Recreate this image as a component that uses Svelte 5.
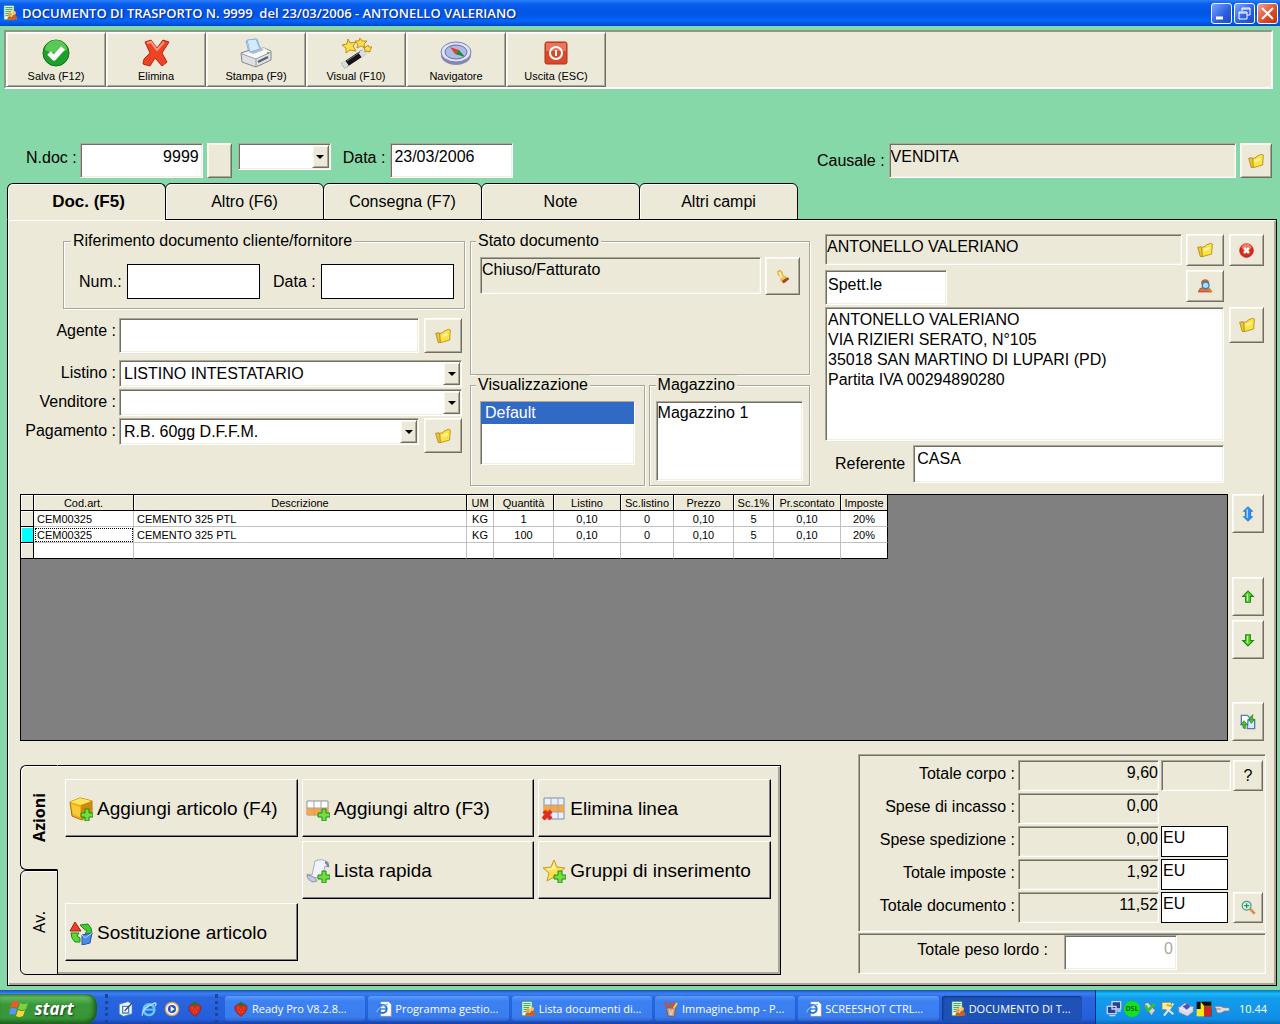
<script lang="ts">
	let activeTab = 'Doc. (F5)';
	let view = 'Default';
	let store = 'Magazzino 1';
	let priceList = 'LISTINO INTESTATARIO';
	let payment = 'R.B. 60gg D.F.F.M.';
	let address =
		'ANTONELLO VALERIANO\nVIA RIZIERI SERATO, N°105\n35018 SAN MARTINO DI LUPARI (PD)\nPartita IVA 00294890280';

	const toolbar = [
		{label: 'Salva (F12)', icon: 'ok'},
		{label: 'Elimina', icon: 'cross'},
		{label: 'Stampa (F9)', icon: 'printer'},
		{label: 'Visual (F10)', icon: 'wand'},
		{label: 'Navigatore', icon: 'compass'},
		{label: 'Uscita (ESC)', icon: 'power'}
	];
	const tabs = ['Doc. (F5)', 'Altro (F6)', 'Consegna (F7)', 'Note', 'Altri campi'];

	const columns = [
		{title: 'Cod.art.', width: 100},
		{title: 'Descrizione', width: 333},
		{title: 'UM', width: 27},
		{title: 'Quantità', width: 60},
		{title: 'Listino', width: 67},
		{title: 'Sc.listino', width: 53},
		{title: 'Prezzo', width: 60},
		{title: 'Sc.1%', width: 40},
		{title: 'Pr.scontato', width: 67},
		{title: 'Imposte', width: 47}
	];
	const rows = [
		['CEM00325', 'CEMENTO 325 PTL', 'KG', '1', '0,10', '0', '0,10', '5', '0,10', '20%'],
		['CEM00325', 'CEMENTO 325 PTL', 'KG', '100', '0,10', '0', '0,10', '5', '0,10', '20%'],
		['', '', '', '', '', '', '', '', '', '']
	];
	let currentRow = 1;

	const actions = [
		{label: 'Aggiungi articolo (F4)', icon: 'box'},
		{label: 'Aggiungi altro (F3)', icon: 'gridAdd'},
		{label: 'Elimina linea', icon: 'gridDel'},
		null,
		{label: 'Lista rapida', icon: 'scroll'},
		{label: 'Gruppi di inserimento', icon: 'star'},
		{label: 'Sostituzione articolo', icon: 'swap'}
	];

	const totals = [
		{id: 'corpo', label: 'Totale corpo :', value: '9,60', extra: 'empty', button: 'help'},
		{id: 'incasso', label: 'Spese di incasso :', value: '0,00', extra: '', button: ''},
		{id: 'spedizione', label: 'Spese spedizione :', value: '0,00', extra: 'EU', button: ''},
		{id: 'imposte', label: 'Totale imposte :', value: '1,92', extra: 'EU', button: ''},
		{id: 'documento', label: 'Totale documento :', value: '11,52', extra: 'EU', button: 'zoom'}
	];

	const tasks = [
		{label: 'Ready Pro V8.2.8...', icon: 'berry'},
		{label: 'Programma gestio...', icon: 'page'},
		{label: 'Lista documenti di...', icon: 'doc'},
		{label: 'Immagine.bmp - P...', icon: 'paint'},
		{label: 'SCREESHOT CTRL...', icon: 'page'},
		{label: 'DOCUMENTO DI T...', icon: 'doc', active: true}
	];
</script>

{#snippet plus()}
	<path d="M16 12h4v4h4v4h-4v4h-4v-4h-4v-4h4z" fill="#6fe03c" stroke="#1f8a1a" />
{/snippet}

{#snippet icon(name: string, size: number)}
	<svg width={size} height={size} viewBox="0 0 24 24" aria-hidden="true">
		{#if name === 'folder'}
			<path d="M1 8l5-1 2 2 1 12-4 1z" fill="#f0c62c" stroke="#9a720c" />
			<path d="M7 8l5-1 1-2 7-3 3 1-1 15-14 4z" fill="#ffe23c" stroke="#9a720c" />
			<path d="M10 10l9-3v4l-9 4z" fill="#fff3a0" />
		{:else if name === 'stop'}
			<circle cx="12" cy="12" r="11" fill="#dd2a1a" stroke="#a31208" />
			<path d="M4 8a8 7 0 0 1 16 0q-8 4-16 0z" fill="#f77a66" />
			<path d="M8 8l8 8M16 8l-8 8" stroke="#fff" stroke-width="4" />
		{:else if name === 'person'}
			<path d="M6 7q1-5 7-5 6 1 5 7l-2 3H8z" fill="#c9642a" />
			<path d="M2 21q1-6 7-7h6q6 2 7 7z" fill="#dd6d43" stroke="#a3431f" />
			<path d="M16 15l6 6" stroke="#d98b32" stroke-width="3" />
			<circle cx="13" cy="11" r="5" fill="#a9e0fa" stroke="#3a7fc0" stroke-width="2" />
		{:else if name === 'stamp'}
			<path d="M4 4q4-4 7 0l2 7 4 1 3 4-7 6-4-4 1-4L5 9z" fill="#f2c04a" stroke="#d09a35" />
			<path d="M11 19l9-6 3 3-9 7z" fill="#9c4a20" />
			<path d="M7 5l4 9" stroke="#fff0a8" stroke-width="3" />
		{:else if name === 'updown'}
			<path d="M12 1l7 7h-3v8h3l-7 7-7-7h3V8H5z" fill="#2f8fee" stroke="#1559ad" />
			<path d="M11 5v13" stroke="#a9dcff" stroke-width="2" />
		{:else if name === 'up'}
			<path d="M12 2l9 9h-5v10H8V11H3z" fill="#5ed62f" stroke="#23861a" stroke-width="2" />
			<path d="M11 7v12" stroke="#b8f592" stroke-width="2" />
		{:else if name === 'down'}
			<path d="M12 22l9-9h-5V3H8v10H3z" fill="#5ed62f" stroke="#23861a" stroke-width="2" />
			<path d="M11 5v12" stroke="#b8f592" stroke-width="2" />
		{:else if name === 'copy'}
			<path d="M2 2h9l3 3v11H2z" fill="#fff" stroke="#587bb8" stroke-width="2" />
			<path d="M12 9h10v13H11z" fill="#dceaff" stroke="#587bb8" stroke-width="2" />
			<path d="M19 1v7h3l-5 6-4-6h3V4z" fill="#41c52c" stroke="#1a7a18" />
			<path d="M8 22v-6h3l-5-6-5 6h3l1 5z" fill="#41c52c" stroke="#1a7a18" />
		{:else if name === 'zoom'}
			<path d="M14 14l8 8" stroke="#e58c4c" stroke-width="4" />
			<circle cx="9" cy="9" r="7" fill="#d9f2e8" stroke="#4b9b8d" stroke-width="2" />
			<path d="M9 5v8M5 9h8" stroke="#28934f" stroke-width="2" />
		{:else if name === 'box'}
			<path d="M1 5l10-4 12 3v13l-10 6-10-4z" fill="#eeb01a" stroke="#a87208" />
			<path d="M1 5l11 3 11-4L11 1z" fill="#ffe35c" />
			<path d="M12 8l11-4v13l-11 6z" fill="#c98c0c" />
			<path d="M2 7l9 3v10l-7-3z" fill="#f9c938" />
			{@render plus()}
		{:else if name === 'gridAdd'}
			<path d="M1 4h21v14H1z" fill="#fff" stroke="#8f8fa0" />
			<path d="M1 11h21v7H1z" fill="#f8a83c" />
			<path d="M1 11h21M8 4v14M15 4v14" stroke="#a8a0a0" />
			{@render plus()}
		{:else if name === 'gridDel'}
			<path d="M2 1h20v21H2z" fill="#e9f1ff" stroke="#7f8cab" />
			<path d="M2 8h20v7H2z" fill="#f8a83c" />
			<path d="M2 8h20M2 15h20M9 1v21M16 1v21" stroke="#a8a4b0" />
			<path d="M2 14l7 8M9 14l-8 8" stroke="#e02c1a" stroke-width="4" />
		{:else if name === 'scroll'}
			<path d="M9 2q7-3 13 1l1 5-4-1-3 12-14-1-1-3 5 1z" fill="#f1f3fb" stroke="#a6adc4" />
			<path d="M1 16q8 1 10 6l-4 1q-6-2-6-7z" fill="#c2c9dc" stroke="#8992b0" />
			<path d="M19 3q3 1 3 5" fill="none" stroke="#7982a3" stroke-width="2" />
			{@render plus()}
		{:else if name === 'star'}
			<path d="M12 1l3 7 8 1-6 5 2 8-7-4-7 4 2-8-6-5 8-1z" fill="#ffdf58" stroke="#c69a1c" />
			<path d="M12 4l2 6-8 1-2-1 6-1z" fill="#fff5ae" />
			{@render plus()}
		{:else if name === 'swap'}
			<path d="M6 1l6 9H1z" fill="#ec4228" stroke="#a02412" />
			<path d="M11 4l8-1 3 4 1 6h-7l2-3-3-2z" fill="#48c930" stroke="#1d8718" />
			<path d="M2 12h8l-2 3 3 2v4H6l-3-4z" fill="#5fd83a" stroke="#1d8718" />
			<path d="M13 14l10-2-2 10-8 2z" fill="#4a8ae8" stroke="#2854a5" />
			<path d="M13 14l3 3 7-5" fill="none" stroke="#b4d5ff" />
		{:else if name === 'doc'}
			<path d="M3 1h15v21H3z" fill="#f4fff4" stroke="#439a60" />
			<path d="M5 4h11M5 7h11M5 10h9M5 13h6M5 16h5" stroke="#4cae68" stroke-width="2" />
			<circle cx="12" cy="14" r="3" fill="#f0a23a" />
			<circle cx="18" cy="12" r="3" fill="#ffc24b" />
			<path d="M8 22q0-6 5-5l2 1q0-4 4-3 4 1 4 7z" fill="#cd5f20" />
		{:else if name === 'berry'}
			<path d="M3 8q4-5 9-2 6-3 9 2 1 8-9 15Q1 16 3 8z" fill="#dc2d1c" stroke="#86190c" />
			<path d="M6 5l5-3 2-1 1 2 5 2-6 3z" fill="#3a6a1c" />
			<path d="M8 10v1M12 12v1M16 10v1M10 16v1M14 16v1" stroke="#ffd28a" />
		{:else if name === 'page'}
			<path d="M7 1h12l4 4v18H7z" fill="#fff" stroke="#8a8a8a" />
			<circle cx="10" cy="12" r="6" fill="none" stroke="#2a73d4" stroke-width="3" />
			<path d="M5 12h11" stroke="#2a73d4" stroke-width="2" />
			<path d="M1 17Q5 6 18 5" fill="none" stroke="#73b3f4" stroke-width="2" />
		{:else if name === 'paint'}
			<path d="M5 10h14l-2 13H8z" fill="#c9a184" stroke="#76503a" />
			<path d="M8 11L3 2M11 11V2M14 11l3-9" stroke="#e0442a" stroke-width="3" />
			<path d="M16 11l5-8" stroke="#f6cf3c" stroke-width="3" />
			<path d="M12 11l1-8" stroke="#36a148" stroke-width="2" />
			<path d="M10 13l1 8M14 13l-1 8" stroke="#fff" />
		{:else if name === 'desk'}
			<path d="M2 5l13-4 6 3v15l-13 4-6-4z" fill="#eef7ff" stroke="#5087c4" />
			<path d="M7 8h9v10H7z" fill="#fff" stroke="#4a84c7" stroke-width="2" />
			<path d="M10 15l11-12" stroke="#344b78" stroke-width="2" />
		{:else if name === 'ie'}
			<circle cx="12" cy="13" r="8" fill="none" stroke="#65c4ff" stroke-width="4" />
			<path d="M6 13h14" stroke="#65c4ff" stroke-width="3" />
			<path d="M2 22Q1 10 21 3q3 0 0 5" fill="none" stroke="#b3e2ff" stroke-width="2" />
		{:else if name === 'media'}
			<circle cx="12" cy="12" r="10" fill="#e9f2ff" stroke="#e29a4b" stroke-width="2" />
			<circle cx="12" cy="12" r="6" fill="#2456b5" />
			<path d="M10 8l6 4-6 4z" fill="#fff" />
		{:else if name === 'net'}
			<path d="M9 1h13v11H9zM2 8h13v11H2z" fill="#283f92" stroke="#c9d5ed" stroke-width="2" />
			<path d="M5 22h9M17 15h5" stroke="#c9d5ed" stroke-width="2" />
		{:else if name === 'usb'}
			<path d="M3 4l6-2 11 12-6 8z" fill="#c9d5d9" stroke="#50646c" />
			<path d="M5 7l4 7 10-9" fill="none" stroke="#3cbf35" stroke-width="4" />
		{:else if name === 'tool'}
			<path d="M3 2h14v11H3z" fill="#fff07c" stroke="#777" />
			<path d="M20 4L6 22M5 7l15 13" stroke="#e8e8df" stroke-width="3" />
			<path d="M10 6l9 2" stroke="#c9b630" stroke-width="3" />
		{:else if name === 'device'}
			<path d="M1 10l9-7 13 6v7l-9 7-13-6z" fill="#d7d8e8" stroke="#757892" />
			<path d="M7 8l7-4 5 4-6 5z" fill="#4a53c4" />
			<path d="M1 10l13 6 9-7" fill="none" stroke="#fff" />
		{:else if name === 'blocks'}
			<path d="M1 1h11v11H1zM12 12h11v11H12z" fill="#101010" />
			<path d="M12 1h11v11H12z" fill="#239d35" />
			<path d="M1 12h11v11H1z" fill="#ffe51c" />
			<path d="M12 8h11v15H12z" fill="#d52719" />
			<path d="M12 1h11v6H12z" fill="#101010" />
			<path d="M7 1l5 6v5H7z" fill="#ffe51c" />
		{:else if name === 'plug'}
			<path d="M1 8h9l5 2h8v5h-7l-6 3H5z" fill="#dedede" stroke="#777" />
			<path d="M1 12h9" stroke="#555" />
		{/if}
	</svg>
{/snippet}

{#snippet bigIcon(name: string)}
	<svg width="32" height="32" viewBox="0 0 32 32" aria-hidden="true">
		{#if name === 'ok'}
			<circle cx="16" cy="16" r="13" fill="#1f9f2c" stroke="#0d7418" />
			<path d="M5 13a11 10 0 0 1 22 0q-11 6-22 0z" fill="#5ac757" />
			<path d="M9 16l5 5 9-10" fill="none" stroke="#fff" stroke-width="5" stroke-linejoin="round" />
		{:else if name === 'cross'}
			<path d="M5 5l6-2 6 8 6-8 6 2-7 11 5 9-5 4-7-8-5 8-7-2 1-5 6-6z" fill="#ee4426" stroke="#ba2512" />
			<path d="M7 6l4-1 6 8 7-8" fill="none" stroke="#ff9880" stroke-width="2" />
		{:else if name === 'printer'}
			<path d="M6 4l11-2 4 11-12 3z" fill="#e3f2ff" stroke="#89b3dc" />
			<path d="M1 16l9-3 14-2 7 3v9l-15 7-14-5z" fill="#dfe0e4" stroke="#85878e" />
			<path d="M2 17l14 5 15-7-7-4-14 3z" fill="#f8f8fa" />
			<path d="M2 17l14 5 15-7M16 22v8" fill="none" stroke="#999ca5" />
			<path d="M8 15l12-4 4 2-11 4z" fill="#b7bcc8" />
			<path d="M7 3l9-1 4 10-10 3z" fill="#d2e9ff" stroke="#89b3dc" />
			<path d="M18 25l10-5" stroke="#555d69" stroke-width="2" />
			<circle cx="28" cy="16" r="1" fill="#3fac2c" />
		{:else if name === 'wand'}
			<path d="M3 29L24 15" stroke="#151515" stroke-width="6" />
			<path d="M3 29l4-3M20 18l7-5" stroke="#d9dce3" stroke-width="6" />
			<path d="M7 24l13-9" stroke="#777" />
			<path d="M8 2l2 4 6-1-3 4 3 5-6-1-4 3v-5L2 8l5-1z" fill="#ffe04c" stroke="#c38e17" />
			<path d="M20 1l2 3 5 0-3 3 1 4-4-2-4 2 1-4-3-3 4 0zM28 8l1 2 3 0-2 3 0 2-3-1-2 1 0-3-2-2 3 0z" fill="#ffe04c" stroke="#c38e17" />
		{:else if name === 'compass'}
			<ellipse cx="16" cy="18" rx="15" ry="10" fill="#8288b4" />
			<ellipse cx="16" cy="15" rx="15" ry="10" fill="#dfe3fa" stroke="#7d83af" />
			<ellipse cx="16" cy="15" rx="11" ry="7" fill="#aebce5" stroke="#686f9b" />
			<path d="M10 10l9 3-4 4z" fill="#e1402b" />
			<path d="M15 17l4-4 6 7z" fill="#248638" />
		{:else if name === 'power'}
			<rect x="5" y="5" width="22" height="22" rx="2" fill="#d94a2b" stroke="#ad3218" />
			<path d="M6 6h20v8H6z" fill="#ea765a" />
			<circle cx="16" cy="16" r="6" fill="none" stroke="#fff" stroke-width="2" />
			<path d="M16 13v6" stroke="#fff" stroke-width="2" />
		{/if}
	</svg>
{/snippet}

<div class="screen">
	<header class="titlebar">
		{@render icon('doc', 16)}
		<h1>DOCUMENTO DI TRASPORTO N. 9999&nbsp; del 23/03/2006 - ANTONELLO VALERIANO</h1>
		<div class="window-buttons">
			<button aria-label="Riduci">
				<svg width="19" height="19" viewBox="0 0 19 19"><path d="M4 14h7" stroke="#fff" stroke-width="3" /></svg>
			</button>
			<button aria-label="Ripristina">
				<svg width="19" height="19" viewBox="0 0 19 19" fill="none" stroke="#fff">
					<path d="M7 7V4h8v7h-3M7 5h8M4 8h8v7H4zM4 9h8" />
				</svg>
			</button>
			<button class="close" aria-label="Chiudi">
				<svg width="19" height="19" viewBox="0 0 19 19"><path d="M4 4l11 11M15 4L4 15" stroke="#fff" stroke-width="2" /></svg>
			</button>
		</div>
	</header>

	<nav class="toolbar">
		{#each toolbar as item}
			<button class="raised tool">
				{@render bigIcon(item.icon)}
				<span>{item.label}</span>
			</button>
		{/each}
	</nav>

	<section class="doc-head">
		<label for="ndoc">N.doc :</label>
		<input id="ndoc" class="sunken short right" value="9999" />
		<button class="raised blank" aria-label="Numerazione"></button>
		<div class="combo sunken small">
			<select aria-label="Serie"><option></option></select>
			<span class="arrow raised"></span>
		</div>
		<label for="data-doc" class="date-label">Data :</label>
		<input id="data-doc" class="sunken short" value="23/03/2006" />
		<div class="causale">
			<label for="causale">Causale :</label>
			<input id="causale" class="sunken grey" value="VENDITA" readonly />
			<button class="raised" aria-label="Scegli causale">{@render icon('folder', 16)}</button>
		</div>
	</section>

	<div class="tabs" role="tablist">
		{#each tabs as tab}
			<button role="tab" aria-selected={activeTab === tab} class:active={activeTab === tab} on:click={() => (activeTab = tab)}>{tab}</button>
		{/each}
	</div>

	<main class="panel">
		<div class="form">
			<div class="left">
				<fieldset class="ref">
					<legend>Riferimento documento cliente/fornitore</legend>
					<label for="ref-num">Num.:</label>
					<input id="ref-num" class="flat" />
					<label for="ref-data" class="second">Data :</label>
					<input id="ref-data" class="flat" />
				</fieldset>
				<div class="line agent">
					<label for="agente">Agente :</label>
					<input id="agente" class="sunken" />
					<button class="raised" aria-label="Scegli agente">{@render icon('folder', 16)}</button>
				</div>
				<div class="line">
					<label for="listino">Listino :</label>
					<div class="combo sunken">
						<select id="listino" bind:value={priceList}><option>LISTINO INTESTATARIO</option></select>
						<span class="arrow raised"></span>
					</div>
				</div>
				<div class="line">
					<label for="venditore">Venditore :</label>
					<div class="combo sunken">
						<select id="venditore"><option></option></select>
						<span class="arrow raised"></span>
					</div>
				</div>
				<div class="line">
					<label for="pagamento">Pagamento :</label>
					<div class="combo sunken">
						<select id="pagamento" bind:value={payment}><option>R.B. 60gg D.F.F.M.</option></select>
						<span class="arrow raised"></span>
					</div>
					<button class="raised" aria-label="Scegli pagamento">{@render icon('folder', 16)}</button>
				</div>
			</div>

			<div class="middle">
				<fieldset class="state">
					<legend>Stato documento</legend>
					<input class="sunken grey" aria-label="Stato documento" value="Chiuso/Fatturato" readonly />
					<button class="raised" aria-label="Cambia stato">{@render icon('stamp', 15)}</button>
				</fieldset>
				<div class="lists">
					<fieldset class="view">
						<legend>Visualizzazione</legend>
						<select class="sunken" size="3" aria-label="Visualizzazione" bind:value={view}>
							<option>Default</option>
						</select>
					</fieldset>
					<fieldset class="store">
						<legend>Magazzino</legend>
						<select class="sunken" size="4" aria-label="Magazzino">
							<option>{store}</option>
						</select>
					</fieldset>
				</div>
			</div>

			<div class="right-col">
				<div class="cust name">
					<input class="sunken grey" aria-label="Cliente" value="ANTONELLO VALERIANO" readonly />
					<button class="raised" aria-label="Scegli cliente">{@render icon('folder', 16)}</button>
				</div>
				<button class="raised side" aria-label="Rimuovi cliente">{@render icon('stop', 15)}</button>
				<div class="cust title">
					<input class="sunken" aria-label="Titolo" value="Spett.le" />
					<button class="raised" aria-label="Cerca cliente">{@render icon('person', 16)}</button>
				</div>
				<textarea class="sunken" aria-label="Indirizzo" bind:value={address}></textarea>
				<button class="raised side tall" aria-label="Scegli indirizzo">{@render icon('folder', 16)}</button>
				<div class="cust contact">
					<label for="referente">Referente</label>
					<input id="referente" class="sunken" value="CASA" />
				</div>
			</div>
		</div>

		<div class="lines">
			<div class="grid-box">
				<table>
					<colgroup>
						<col class="mark-col" />
						{#each columns as column}
							<col style="width: {column.width}px" />
						{/each}
					</colgroup>
					<thead>
						<tr>
							<th></th>
							{#each columns as column}
								<th>{column.title}</th>
							{/each}
						</tr>
					</thead>
					<tbody>
						{#each rows as row, i}
							<tr class:current={i === currentRow}>
								<th></th>
								{#each row as cell}
									<td>{cell}</td>
								{/each}
							</tr>
						{/each}
					</tbody>
				</table>
			</div>
			<div class="side-buttons">
				<button class="raised" aria-label="Sposta">{@render icon('updown', 16)}</button>
				<button class="raised push" aria-label="Su">{@render icon('up', 14)}</button>
				<button class="raised" aria-label="Giù">{@render icon('down', 14)}</button>
				<button class="raised last" aria-label="Copia righe">{@render icon('copy', 16)}</button>
			</div>
		</div>

		<div class="bottom">
			<div class="actions">
				<div class="vtabs">
					<button class="active"><span>Azioni</span></button>
					<button><span>Av.</span></button>
				</div>
				<div class="action-grid">
					{#each actions as action}
						{#if action}
							<button>{@render icon(action.icon, 24)}{action.label}</button>
						{:else}
							<span></span>
						{/if}
					{/each}
				</div>
			</div>

			<div class="totals">
				<div class="sums sunken">
					{#each totals as total}
						<label for={total.id}>{total.label}</label>
						<input id={total.id} class="sunken grey right" value={total.value} readonly />
						{#if total.extra === 'empty'}
							<input class="sunken grey" aria-label="Valuta" readonly />
						{:else if total.extra}
							<input class="flat currency" aria-label="Valuta" value={total.extra} />
						{:else}
							<span></span>
						{/if}
						{#if total.button === 'help'}
							<button class="raised">?</button>
						{:else if total.button}
							<button class="raised" aria-label="Dettaglio">{@render icon('zoom', 15)}</button>
						{:else}
							<span></span>
						{/if}
					{/each}
				</div>
				<div class="weight sunken">
					<label for="peso">Totale peso lordo :</label>
					<input id="peso" class="sunken right" value="0" />
				</div>
			</div>
		</div>
	</main>

	<footer class="taskbar">
		<button class="start">
			<svg width="20" height="20" viewBox="0 0 20 20" aria-hidden="true">
				<path d="M3 3q3-2 7 0L8 9Q5 7 1 9z" fill="#f0572c" />
				<path d="M11 4q4 2 8 0l-2 6q-4 2-8 0z" fill="#7ed13b" />
				<path d="M1 10q3-2 7 0l-2 6q-3-2-6 0z" fill="#5b94f5" />
				<path d="M9 11q4 2 7 0l-2 6q-4 2-7 0z" fill="#ffd23c" />
			</svg>
			<span>start</span>
		</button>
		<div class="quick">
			{#each ['desk', 'ie', 'media', 'berry'] as name}
				<button aria-label={name}>{@render icon(name, 16)}</button>
			{/each}
		</div>
		<div class="tasks">
			{#each tasks as task}
				<button class:active={task.active}>{@render icon(task.icon, 16)}<span>{task.label}</span></button>
			{/each}
		</div>
		<div class="tray">
			{@render icon('net', 16)}
			<span class="dsl">DSL</span>
			{#each ['usb', 'tool', 'device', 'blocks', 'plug'] as name}
				{@render icon(name, 16)}
			{/each}
			<time>10.44</time>
		</div>
	</footer>
</div>

<style>
	:global(body) {
		margin: 0;
		background: #87d8a8;
	}
	* {
		box-sizing: border-box;
	}
	.screen {
		min-height: 100vh;
		display: flex;
		flex-direction: column;
		background: #87d8a8;
		font-family: 'Liberation Sans', Arial, sans-serif;
		font-size: 16px;
		line-height: 20px;
		color: #000;
	}
	button,
	input,
	select,
	textarea {
		font: inherit;
		color: inherit;
		margin: 0;
		padding: 0;
		border-radius: 0;
		outline: none;
	}
	button {
		display: flex;
		align-items: center;
		justify-content: center;
		flex: none;
	}
	svg {
		display: block;
		flex: none;
	}
	.raised {
		background: #ece9d8;
		border: 1px solid;
		border-color: #fff #716f64 #716f64 #fff;
		box-shadow: inset 1px 1px 0 #f8f6ee, inset -1px -1px 0 #aca899;
	}
	.sunken {
		border: 1px solid;
		border-color: #aca899 #fff #fff #aca899;
		box-shadow: inset 1px 1px 0 #716f64, inset -1px -1px 0 #f1efe2;
	}
	input,
	textarea {
		min-width: 0;
		background: #fff;
		padding: 0 3px 8px;
	}
	.grey {
		background: #ece9d8;
		padding-left: 1px;
	}
	.right {
		text-align: right;
	}
	.flat {
		border: 1px solid #000;
	}
	label {
		white-space: nowrap;
	}

	/* title bar */
	.titlebar {
		display: flex;
		align-items: center;
		height: 26px;
		padding: 0 2px 0 2px;
		gap: 4px;
		background: linear-gradient(#2a80fa, #0a5eee 15%, #0054e3 50%, #0464fc 80%, #0048c8);
	}
	h1 {
		flex: 1;
		margin: 0;
		color: #fff;
		font: 600 13px/20px 'Open Sans', 'Noto Sans', sans-serif;
		text-shadow: 1px 1px 1px #0a2a8a;
		white-space: nowrap;
	}
	.window-buttons {
		display: flex;
		gap: 2px;
	}
	.window-buttons button {
		width: 21px;
		height: 21px;
		border: 1px solid #fff;
		border-radius: 3px;
		background: linear-gradient(135deg, #7ba5f8, #2a5ee2 60%, #1c49c4);
	}
	.window-buttons .close {
		background: linear-gradient(135deg, #f2a088, #df4a24 60%, #b9310d);
	}

	/* toolbar */
	.toolbar {
		display: flex;
		margin: 4px 7px 0 4px;
		height: 59px;
		background: #ece9d8;
		border: 2px solid;
		border-color: #8b9a83 #fff #fff #8b9a83;
	}
	.tool {
		width: 100px;
		flex-direction: column;
		justify-content: flex-start;
		padding-top: 4px;
		font-size: 11px;
		line-height: 14px;
	}

	/* document header */
	.doc-head {
		display: flex;
		align-items: flex-start;
		margin: 54px 8px 0 26px;
		height: 40px;
	}
	.doc-head label {
		line-height: 29px;
	}
	.doc-head input {
		height: 35px;
	}
	.short {
		width: 123px;
		margin-left: 3px;
	}
	.blank {
		width: 25px;
		height: 35px;
		margin: 0 6px 0 4px;
	}
	.combo {
		display: flex;
		flex: 1;
		height: 27px;
		padding: 1px;
		background: #fff;
	}
	.combo select {
		flex: 1;
		min-width: 0;
		padding-left: 3px;
		border: 0;
		background: transparent;
		appearance: none;
	}
	.combo.small {
		flex: 0 0 93px;
	}
	.arrow {
		display: flex;
		align-items: center;
		justify-content: center;
		width: 17px;
	}
	.arrow::before {
		content: '';
		border: 4px solid transparent;
		border-top-color: #000;
		border-bottom-width: 0;
	}
	.date-label {
		margin: 0 2px 0 12px;
	}
	.causale {
		display: flex;
		flex: 0 0 455px;
		margin-left: auto;
		gap: 4px;
	}
	.causale label {
		line-height: 35px;
	}
	.causale input {
		flex: 1;
	}
	.causale button {
		width: 32px;
		height: 35px;
	}

	/* tabs and main panel */
	.tabs {
		display: flex;
		margin: 0 7px;
		position: relative;
	}
	.tabs button {
		width: 159px;
		height: 37px;
		margin-right: -1px;
		background: #ece9d8;
		border: 1px solid #000;
		border-radius: 6px 6px 0 0;
		box-shadow: inset 1px 1px 0 #fff;
	}
	.tabs .active {
		padding-left: 4px;
		font-size: 17px;
		font-weight: 700;
		border-bottom-color: #ece9d8;
	}
	.panel {
		flex: 1;
		display: flex;
		flex-direction: column;
		margin: -1px 3px 4px 7px;
		padding: 11px 12px 10px;
		background: #ece9d8;
		border: 1px solid #000;
		box-shadow: inset 1px 1px 0 #fff, inset -2px -2px 0 #aca899;
	}
	.form {
		display: grid;
		grid-template-columns: minmax(0, 445fr) minmax(0, 340fr) minmax(0, 449fr);
		gap: 5px;
	}
	fieldset {
		margin: 0;
		min-width: 0;
		border: 1px solid #aca899;
		box-shadow: inset 1px 1px 0 #fff, 1px 1px 0 #fff;
	}
	legend {
		margin-left: -4px;
		padding: 0 2px;
		height: 20px;
		background: #ece9d8;
	}
	.ref {
		display: flex;
		align-items: center;
		margin: 0 0 9px 43px;
		padding: 13px 10px 9px 15px;
		gap: 5px;
	}
	.ref legend {
		margin-left: -8px;
	}
	.ref input {
		flex: 1;
		height: 35px;
	}
	.ref .second {
		margin-left: 8px;
	}
	.line {
		display: flex;
		margin: 0 3px 2px 0;
	}
	.agent {
		margin-bottom: 7px;
	}
	.line label {
		flex: none;
		width: 99px;
		padding-right: 3px;
		text-align: right;
		line-height: 26px;
	}
	.line input {
		flex: 1;
		height: 35px;
	}
	.line button {
		width: 38px;
		height: 35px;
		margin-left: 5px;
	}
	.state {
		display: flex;
		align-items: flex-start;
		height: 144px;
		padding: 6px 9px;
		gap: 4px;
	}
	.state input {
		flex: 1;
		height: 37px;
		padding-bottom: 11px;
	}
	.state button {
		width: 35px;
		height: 38px;
	}
	.lists {
		display: flex;
		gap: 4px;
	}
	.lists fieldset {
		height: 111px;
		padding: 6px 9px;
	}
	.view {
		flex: 172;
	}
	.store {
		flex: 164;
	}
	.lists .store {
		padding: 6px;
	}
	.store legend {
		margin-left: 0;
	}
	.lists select {
		display: block;
		width: 100%;
		height: 64px;
		background: #fff;
		overflow: hidden;
	}
	.lists .store select {
		height: 80px;
	}
	option {
		min-height: 22px;
		padding: 2px 1px;
	}
	.view option:checked {
		padding-left: 4px;
		background: #316ac5 linear-gradient(#316ac5, #316ac5);
		-webkit-text-fill-color: #fff;
	}
	.right-col {
		display: grid;
		grid-template-columns: minmax(0, 1fr) 35px;
		grid-template-rows: 32px 33px 134px 38px;
		column-gap: 5px;
		row-gap: 4px;
		padding: 3px 0 0 10px;
		align-items: start;
	}
	.cust {
		grid-column: 1;
		display: flex;
		justify-content: space-between;
		gap: 4px;
	}
	.cust button {
		width: 38px;
		height: 32px;
	}
	.name input {
		flex: 1;
		height: 31px;
		padding-bottom: 6px;
	}
	.side {
		width: 35px;
		height: 32px;
	}
	.title input {
		width: 122px;
		height: 35px;
		padding: 0 2px 6px;
	}
	textarea {
		display: block;
		grid-column: 1;
		width: 100%;
		height: 134px;
		padding: 2px;
		resize: none;
		overflow: hidden;
	}
	.tall {
		height: 36px;
	}
	.contact {
		padding-left: 10px;
	}
	.contact label {
		line-height: 38px;
	}
	.contact input {
		flex: 1;
		height: 38px;
		margin-left: 4px;
		padding-bottom: 11px;
	}

	/* lines grid */
	.lines {
		display: flex;
		flex: 1;
		gap: 4px;
		margin-top: 8px;
		min-height: 247px;
	}
	.grid-box {
		flex: 1;
		border: 1px solid #000;
		background: #808080;
	}
	table {
		table-layout: fixed;
		width: 867px;
		border-collapse: separate;
		border-spacing: 0;
		background: #fff;
		font-size: 11px;
		line-height: 14px;
	}
	.mark-col {
		width: 13px;
	}
	th,
	td {
		height: 16px;
		padding: 0;
		font-weight: 400;
		text-align: center;
		white-space: nowrap;
		border-right: 1px solid #c0c0c0;
		border-bottom: 1px solid #c0c0c0;
	}
	th {
		background: #ece9d8;
		border-color: #000;
		box-shadow: inset 1px 1px 0 #fff;
	}
	td:nth-child(2),
	td:nth-child(3) {
		text-align: left;
		padding-left: 3px;
	}
	td:last-child {
		border-right-color: #000;
	}
	tbody tr:last-child td {
		border-bottom-color: #000;
	}
	.current th {
		background: #0ff;
	}
	.current td:nth-child(2) {
		outline: 1px dotted #000;
		outline-offset: -2px;
	}
	.side-buttons {
		display: flex;
		flex-direction: column;
		gap: 4px;
	}
	.side-buttons button {
		width: 32px;
		height: 39px;
	}
	.side-buttons .push {
		margin-top: 40px;
	}
	.side-buttons .last {
		margin-top: auto;
	}

	/* actions */
	.bottom {
		display: grid;
		grid-template-columns: minmax(0, 761fr) minmax(0, 408fr);
		gap: 77px;
		margin: 13px -2px 0 0;
	}
	.actions {
		display: flex;
		height: 210px;
		margin-top: 11px;
	}
	.vtabs {
		display: flex;
		flex-direction: column;
		position: relative;
	}
	.vtabs button {
		width: 38px;
		flex: 1;
		margin-right: -1px;
		background: #ece9d8;
		border: 1px solid #000;
		border-radius: 6px 0 0 6px;
		box-shadow: inset 1px 1px 0 #fff;
	}
	.vtabs .active {
		border-right-color: #ece9d8;
		font-weight: 700;
	}
	.vtabs span {
		writing-mode: vertical-rl;
		transform: rotate(180deg);
		font-family: 'Noto Sans', sans-serif;
		font-size: 16px;
	}
	.action-grid {
		flex: 1;
		display: grid;
		grid-template-columns: repeat(3, 1fr);
		grid-auto-rows: 58px;
		gap: 4px;
		padding: 13px 9px 0 7px;
		border: 1px solid #000;
		box-shadow: inset 0 1px 0 #fff, inset -2px -2px 0 #aca899;
	}
	.action-grid button {
		justify-content: flex-start;
		padding: 2px 0 0 3px;
		gap: 4px;
		background: #ece9d8;
		border: 1px solid;
		border-color: #fff #000 #000 #fff;
		box-shadow: inset -1px -1px 0 #808080;
		font-size: 19px;
		white-space: nowrap;
	}

	/* totals */
	.sums {
		display: grid;
		grid-template-columns: 1fr 141px 70px 30px;
		grid-auto-rows: 31px;
		gap: 2px;
		padding: 5px 2px 8px 1px;
	}
	.sums label {
		padding-right: 1px;
		text-align: right;
		line-height: 27px;
	}
	.sums input {
		padding-right: 0;
		padding-bottom: 5px;
	}
	.sums .currency {
		margin-right: 3px;
		padding: 0 1px 7px;
	}
	.weight {
		display: flex;
		justify-content: flex-end;
		gap: 16px;
		margin-top: 1px;
		padding: 1px 88px 3px 0;
	}
	.weight label {
		line-height: 30px;
	}
	.weight input {
		width: 113px;
		height: 35px;
		color: #aca899;
	}

	/* taskbar */
	.taskbar {
		display: flex;
		align-items: stretch;
		height: 34px;
		color: #fff;
		font: 11px/16px 'Open Sans', 'Noto Sans', sans-serif;
		background: linear-gradient(#1c50be, #3a80f0 10%, #2a66e0 22%, #245edb 85%, #1941a5);
	}
	.taskbar button {
		border: 0;
		background: none;
	}
	.taskbar .start {
		width: 97px;
		margin-top: 4px;
		gap: 5px;
		padding-right: 14px;
		border-radius: 0 10px 12px 0;
		background: linear-gradient(#3f8f3f, #5fb75d 12%, #3a983a 35%, #379637 80%, #256f25);
		box-shadow: inset -3px -1px 4px #1c5a1c;
		font: italic 700 17px/22px 'Open Sans', sans-serif;
		text-shadow: 1px 1px 2px #1a3c1a;
	}
	.quick {
		display: flex;
		align-items: center;
		gap: 7px;
		margin: 4px 5px 0 8px;
		padding: 0 12px 0 10px;
		border: dotted #1b4699;
		border-width: 0 3px;
	}
	.tasks {
		display: flex;
		flex: 1;
		gap: 3px;
		margin: 6px 13px 3px 2px;
		min-width: 0;
	}
	.tasks button {
		flex: 1 1 0;
		min-width: 0;
		justify-content: flex-start;
		gap: 3px;
		padding-left: 8px;
		border-radius: 3px;
		background: linear-gradient(#5c9bfd, #3c81f3 20%, #3a7cee 85%, #2c62cb);
		white-space: nowrap;
	}
	.tasks .active {
		background: #1e52b7;
		box-shadow: inset 1px 1px 2px #12357e;
	}
	.tray {
		display: flex;
		align-items: center;
		gap: 2px;
		padding: 4px 13px 0 10px;
		border-left: 1px solid #092e7a;
		background: linear-gradient(#0f6bc8, #19b9f5 10%, #139cec 25%, #118ee8 85%, #0d6dba);
	}
	.dsl {
		width: 16px;
		height: 16px;
		border-radius: 50%;
		background: #16e01a;
		color: #063;
		font-size: 7px;
		font-weight: 700;
		text-align: center;
	}
	time {
		margin-left: 7px;
	}
</style>
